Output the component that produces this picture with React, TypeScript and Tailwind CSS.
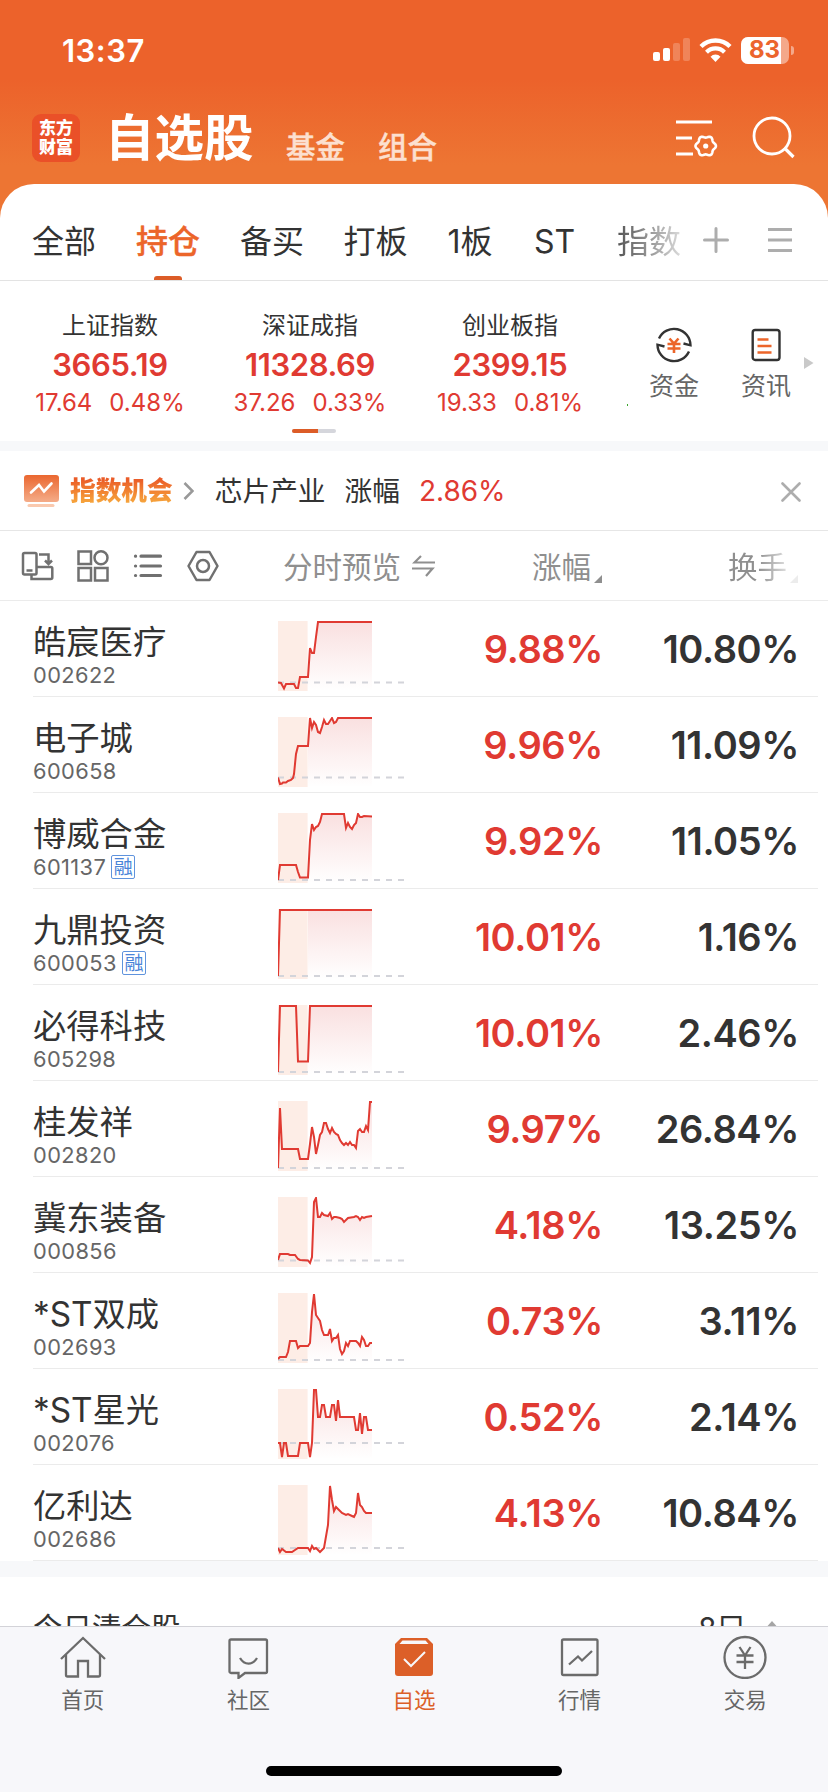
import { useId } from 'react';

type Point = [number, number];

type Stock = {
  name: string;
  code: string;
  margin?: boolean;
  change: string;
  turnover: string;
  base: number;
  points: Point[];
};

const tabs = [
  { label: '全部', className: 'w-[104px]' },
  { label: '持仓', className: 'w-[104px]', active: true },
  { label: '备买', className: 'w-[104px]' },
  { label: '打板', className: 'w-[103px]' },
  { label: '1板', className: 'w-[86px]' },
  { label: 'ST', className: 'w-[83px]' },
];

const indices = [
  { name: '上证指数', value: '3665.19', diff: '17.64', pct: '0.48%' },
  { name: '深证成指', value: '11328.69', diff: '37.26', pct: '0.33%' },
  { name: '创业板指', value: '2399.15', diff: '19.33', pct: '0.81%' },
];

const stocks: Stock[] = [
  {
    name: '皓宸医疗', code: '002622', change: '9.88%', turnover: '10.80%', base: 61.5,
    points: [[0, 61.5], [3, 62], [6, 67.5], [8, 63], [16, 63], [18, 67], [20, 67], [22, 56], [30, 56], [32, 27], [34, 32], [36, 32], [38, 16], [40, 1], [94, 1]],
  },
  {
    name: '电子城', code: '600658', change: '9.96%', turnover: '11.09%', base: 60.5,
    points: [[0, 60.5], [2, 67], [4, 66.5], [5, 65.5], [8, 65.5], [10, 64], [13, 63], [15, 61], [16, 57], [18, 37], [20, 29], [30, 29], [32, 1], [34, 11], [36, 5], [38, 8], [40, 15], [42, 16], [44, 10], [46, 3], [48, 7], [50, 7], [52, 4], [54, 1], [56, 6], [58, 5], [60, 1], [94, 1]],
  },
  {
    name: '博威合金', code: '601137', margin: true, change: '9.92%', turnover: '11.05%', base: 67,
    points: [[0, 67], [2, 52], [18, 52], [20, 59], [22, 64.5], [30, 64.5], [32, 27], [34, 11], [36, 17], [38, 14], [40, 13], [42, 9], [44, 1], [66, 1], [68, 15], [70, 10], [72, 14], [74, 16], [76, 12], [78, 10], [80, 1], [82, 4], [84, 4], [86, 3], [94, 3.5]],
  },
  {
    name: '九鼎投资', code: '600053', margin: true, change: '10.01%', turnover: '1.16%', base: 67,
    points: [[0, 67], [2, 1], [94, 1]],
  },
  {
    name: '必得科技', code: '605298', change: '10.01%', turnover: '2.46%', base: 67,
    points: [[0, 67], [2, 1], [18, 1], [20, 56.5], [30, 56.5], [32, 1], [94, 1]],
  },
  {
    name: '桂发祥', code: '002820', change: '9.97%', turnover: '26.84%', base: 67,
    points: [[0, 67], [2, 7], [4, 48], [20, 48], [22, 58], [30, 58], [32, 43], [34, 26], [36, 36], [38, 53], [40, 44], [42, 34], [44, 31], [46, 22], [48, 22], [50, 28], [52, 32], [54, 27], [56, 31], [58, 33], [60, 34], [62, 39], [64, 42], [66, 44], [68, 42], [70, 44], [72, 41], [74, 44], [76, 44], [78, 47], [80, 30], [82, 28], [84, 31], [86, 31], [88, 25], [90, 29], [92, 1], [94, 1]],
  },
  {
    name: '冀东装备', code: '000856', change: '4.18%', turnover: '13.25%', base: 63.5,
    points: [[0, 63], [2, 57], [10, 57], [12, 58], [17, 58], [20, 62], [22, 63], [30, 63.5], [32, 66], [34, 60], [36, 5], [38, 1], [40, 20], [42, 20], [44, 16], [46, 18], [50, 19], [52, 16], [54, 22], [56, 20], [58, 20], [62, 21], [64, 22], [66, 25], [70, 21], [76, 20], [78, 19], [80, 20], [82, 23], [84, 20], [86, 21], [88, 20], [94, 19]],
  },
  {
    name: '*ST双成', code: '002693', change: '0.73%', turnover: '3.11%', base: 67,
    points: [[0, 66], [2, 64], [8, 64], [10, 59], [12, 48], [18, 48], [20, 55], [22, 53], [30, 53], [32, 50], [34, 19], [36, 1], [38, 22], [40, 25], [42, 28], [44, 37], [46, 42], [50, 42], [52, 36], [54, 48], [56, 45], [58, 45], [60, 42], [62, 56], [64, 61], [66, 58], [68, 50], [70, 53], [72, 48], [78, 48], [80, 50], [82, 53], [84, 44], [86, 47], [88, 53], [90, 53], [92, 50], [94, 50]],
  },
  {
    name: '*ST星光', code: '002076', change: '0.52%', turnover: '2.14%', base: 54,
    points: [[0, 54], [2, 54], [4, 68], [6, 54], [8, 54], [10, 67], [20, 67], [22, 54], [30, 54], [32, 68], [34, 54], [36, 1], [38, 1], [40, 28], [42, 28], [44, 16], [46, 16], [48, 28], [52, 28], [54, 16], [56, 16], [58, 32], [60, 11], [62, 28], [76, 28], [78, 41], [80, 41], [82, 24], [84, 45], [86, 28], [88, 28], [90, 41], [94, 41]],
  },
  {
    name: '亿利达', code: '002686', change: '4.13%', turnover: '10.84%', base: 63,
    points: [[0, 63], [2, 67], [4, 64], [8, 67], [14, 67], [20, 63], [30, 63], [32, 66], [34, 61], [36, 64], [38, 63], [40, 65], [42, 67], [46, 63], [50, 40], [52, 1], [54, 15], [56, 26], [58, 22], [60, 24], [64, 28], [68, 30], [70, 29], [74, 31], [76, 32], [78, 28], [80, 8], [82, 20], [84, 22], [86, 26], [88, 28], [94, 28]],
  },
];

// six-lobed cog outline around (30.7, 28)
const cog = Array.from({ length: 72 }, (_, i) => {
  const a = (i * Math.PI) / 36;
  const r = 9.3 + 0.95 * Math.cos(6 * a);
  return `${(30.7 + r * Math.cos(a)).toFixed(2)},${(28 + r * Math.sin(a)).toFixed(2)}`;
}).join(' ');

function Sparkline({ points, base }: { points: Point[]; base: number }) {
  const id = useId();
  const line = points.map((p) => p.join(',')).join(' ');

  return (
    <svg width="126" height="70" viewBox="0 0 126 70" fill="none">
      <defs>
        <linearGradient id={`${id}-fill`} x1="0" y1="0" x2="0" y2="70" gradientUnits="userSpaceOnUse">
          <stop stopColor="#dc3a3a" stopOpacity="0.16" />
          <stop offset="1" stopColor="#dc3a3a" stopOpacity="0" />
        </linearGradient>
        <clipPath id={`${id}-clip`}>
          <rect x="30" width="64" height="70" />
        </clipPath>
      </defs>
      <rect width="29.6" height="70" fill="#fdede6" />
      <polygon points={`0,70 ${line} 94,70`} fill={`url(#${id}-fill)`} clipPath={`url(#${id}-clip)`} />
      <path d={`M0 ${base}H126`} stroke="#d3d4da" strokeWidth="2" strokeDasharray="6 6" />
      <polyline points={line} stroke="#e03a32" strokeWidth="2" />
    </svg>
  );
}

function StatusBar() {
  return (
    <div className="flex h-[100px] items-center justify-between pl-[62px] pr-[34px] text-white">
      <span className="text-[31px] font-semibold leading-none tracking-[0.5px]">13:37</span>
      <div className="flex items-center gap-[9px]">
        <svg width="37" height="24" viewBox="0 0 37 24" fill="#fff">
          <rect y="14" width="7" height="9" rx="2" />
          <rect x="10" y="10" width="7" height="13" rx="2" />
          <rect x="20" y="5" width="7" height="18" rx="2" opacity="0.22" />
          <rect x="30" width="7" height="23" rx="2" opacity="0.22" />
        </svg>
        <svg width="33" height="24" viewBox="0 0 33 24" fill="none" stroke="#fff">
          <path d="M2 8.5a20.5 20.5 0 0 1 29 0" strokeWidth="4.4" />
          <path d="M7.5 14.2a12.7 12.7 0 0 1 18 0" strokeWidth="4.2" />
          <path d="M16.500 24l-5-5.300a7 7 0 0 1 10 0z" fill="#fff" stroke="none" />
        </svg>
        <div className="flex items-center gap-[2px]">
          <div className="flex h-[27px] w-[48px] overflow-hidden rounded-[7px] bg-white/45">
            <div className="flex w-[40px] items-center justify-end bg-white pr-[1px] text-[24px] font-bold leading-none text-[#ec652d]">
              83
            </div>
          </div>
          <div className="h-[9px] w-[3px] rounded-r-full bg-white/45" />
        </div>
      </div>
    </div>
  );
}

function TopNav() {
  return (
    <div className="flex h-[84px] pl-8 pr-[33px] text-white">
      <div className="mt-[14px] flex size-12 flex-col items-center justify-center rounded-[9px] bg-[#ea5028] text-[17px] font-black leading-[19px]">
        <span className="h-[19px]">东方</span>
        <span className="h-[19px]">财富</span>
      </div>
      <h1 className="ml-[25px] mt-[10px] w-[150px] text-[49.500px] font-bold leading-[56px]">自选股</h1>
      <span className="ml-[31px] mt-[28px] text-[29.500px] font-medium leading-[38px] text-[#fce0d0] [-webkit-text-stroke:0.4px]">基金</span>
      <span className="ml-[33px] mt-[28px] text-[29.500px] font-medium leading-[38px] text-[#fce0d0] [-webkit-text-stroke:0.4px]">组合</span>
      <svg className="ml-auto mt-[18px]" width="44" height="40" viewBox="0 0 44 40" fill="none" stroke="#fff" strokeWidth="3">
        <path d="M1 4h36M1 20h16M1 36h17" />
        <polygon points={cog} strokeWidth="2.600" />
        <circle cx="30.700" cy="28" r="2.600" fill="#fff" stroke="none" />
      </svg>
      <svg className="ml-[32px] mt-[16px]" width="44" height="44" viewBox="0 0 44 44" fill="none" stroke="#fff" strokeWidth="2.800">
        <circle cx="21" cy="20" r="18" />
        <path d="M33.500 32l9 9" strokeWidth="3.200" />
      </svg>
    </div>
  );
}

function GroupTabs() {
  return (
    <div className="flex h-[97px] items-start rounded-t-[34px] border-b border-[#e3e3e3] bg-white text-[32px] text-[#333]">
      <div className="ml-[12px] flex h-full w-[672px] overflow-hidden">
        {tabs.map((tab) => (
          <div key={tab.label} className={`relative flex shrink-0 justify-center pt-[34px] leading-[48px] ${tab.className}`}>
            <span className={tab.active ? 'font-medium text-[#ec652a] [-webkit-text-stroke:0.4px]' : ''}>{tab.label}</span>
            {tab.active && <div className="absolute bottom-0 h-1 w-7 rounded-t-[3px] bg-[#dc5c27]" />}
          </div>
        ))}
        <span className="ml-[21px] w-[66px] shrink-0 bg-gradient-to-r from-[#555] to-[#e0e0e0] bg-clip-text pt-[34px] leading-[48px] text-transparent">
          指数
        </span>
      </div>
      <svg className="ml-[19px] mt-[43px]" width="26" height="26" viewBox="0 0 26 26" stroke="#adadad" strokeWidth="3" strokeLinecap="round">
        <path d="M1.500 13h23M13 1.500v23" />
      </svg>
      <svg className="ml-[39px] mt-[43px]" width="24" height="26" viewBox="0 0 24 26" stroke="#adadad" strokeWidth="3">
        <path d="M0 2.500h24M0 13h24M0 23.500h24" />
      </svg>
    </div>
  );
}

function IndexStrip() {
  return (
    <div className="flex h-[160px] bg-white">
      <div className="flex w-[628px] flex-col overflow-hidden pl-[10px]">
        <div className="flex h-[148px]">
          {indices.map((item) => (
            <div key={item.name} className="flex w-[200px] shrink-0 flex-col items-center pt-[27px]">
              <span className="text-[24px] leading-[36px] text-[#333]">{item.name}</span>
              <span className="mt-[3px] text-[31px] font-semibold leading-[36px] tracking-[-0.4px] text-[#e03a32]">{item.value}</span>
              <div className="mt-[4px] flex gap-[17px] text-[24px] leading-[32px] text-[#e03a32]">
                <span>{item.diff}</span>
                <span>{item.pct}</span>
              </div>
            </div>
          ))}
          <div className="ml-[17px] mt-[123px] h-[2px] w-px bg-[#3aa52b]" />
        </div>
        <div className="ml-[282px] flex h-1 w-11 overflow-hidden rounded-full bg-[#d5d6dc]">
          <div className="w-[26px] bg-[#dc5c27]" />
        </div>
      </div>
      <div className="flex w-[92px] flex-col items-center pt-[45px] text-[25px] leading-[36px] text-[#666]">
        <svg width="38" height="38" viewBox="0 0 38 38" fill="none" stroke="#333" strokeWidth="2.400">
          <path d="M4 12.500a16.500 16.500 0 0 1 31.500 6.800l-7-1.800M34 25.500A16.500 16.500 0 0 1 2.500 18.700l7 1.800" />
          <path d="M14.500 12.500l4.500 5 4.500-5M12.500 18h13M12.500 22.500h13M19 17.500v9.500" stroke="#ec652a" strokeWidth="2.600" />
        </svg>
        <span className="mt-[4px]">资金</span>
      </div>
      <div className="flex w-[92px] flex-col items-center pt-[45px] text-[25px] leading-[36px] text-[#666]">
        <svg width="30" height="38" viewBox="0 0 30 38" fill="none" stroke="#333" strokeWidth="2.400">
          <rect x="1.700" y="4" width="26.800" height="30" rx="2.500" />
          <path d="M6.500 13.500h11M6.500 20h14M6.500 26.500h14" stroke="#ec652a" strokeWidth="2.600" />
        </svg>
        <span className="mt-[4px]">资讯</span>
      </div>
      <svg className="-ml-2 mt-[76px]" width="10" height="12" viewBox="0 0 10 12" fill="#c9c9c9">
        <path d="M0 0l9.500 6L0 12z" />
      </svg>
    </div>
  );
}

function Opportunity() {
  return (
    <div className="flex h-[80px] items-center border-b border-[#e6e6e6] bg-white pl-6 pr-[28px]">
      <svg width="35" height="34" viewBox="0 0 35 34" fill="none">
        <defs>
          <linearGradient id="opportunity" x1="0" y1="0" x2="0" y2="27" gradientUnits="userSpaceOnUse">
            <stop stopColor="#ea642c" />
            <stop offset="1" stopColor="#f4aa86" />
          </linearGradient>
        </defs>
        <rect y="1" width="35" height="27" rx="3" fill="url(#opportunity)" />
        <path d="M7 18.500l8-7.500 5 6.500 7.500-8" stroke="#fff" strokeWidth="2.600" strokeLinecap="round" />
        <path d="M5 31.500h24" stroke="#fac9ae" strokeWidth="3" strokeLinecap="round" />
      </svg>
      <span className="ml-[11px] bg-gradient-to-b from-[#ea5c28] from-20% to-[#f6a43c] to-80% bg-clip-text text-[25.700px] font-black leading-[38px] text-transparent">
        指数机会
      </span>
      <svg className="ml-[10px]" width="11" height="18" viewBox="0 0 11 18" fill="none" stroke="#999" strokeWidth="2.600">
        <path d="M1.500 1l8 8-8 8" />
      </svg>
      <span className="ml-[21px] text-[27.700px] leading-[38px] text-[#333]">芯片产业</span>
      <span className="ml-[19px] text-[27.700px] leading-[38px] text-[#333]">涨幅</span>
      <span className="ml-[19px] text-[28px] leading-[38px] text-[#e03a32]">2.86%</span>
      <svg className="ml-auto mr-[-1px] mt-[2px]" width="20" height="20" viewBox="0 0 20 20" stroke="#adadad" strokeWidth="2.600" strokeLinecap="round">
        <path d="M1.500 1.500l17 17M18.500 1.500l-17 17" />
      </svg>
    </div>
  );
}

function TableHeader() {
  return (
    <div className="flex h-[70px] items-center border-b border-[#ebebeb] bg-white pl-[21px] text-[29.500px] text-[#8f8f8f]">
      <div className="flex w-[262px] items-center gap-[23px]">
        <svg width="33" height="32" viewBox="0 0 33 32" fill="none" stroke="#707070" strokeWidth="2.500">
          <rect x="2" y="3" width="13.500" height="21.500" rx="1.500" />
          <path d="M5.500 20.500h6M18 4.500h9.500V13M24 10.500l3.500 3.500 3.500-3.500M15.500 17h14.300a1.500 1.500 0 0 1 1.500 1.500v9a1.500 1.500 0 0 1-1.500 1.500H10.500v-4.500" />
        </svg>
        <svg width="32" height="32" viewBox="0 0 32 32" fill="none" stroke="#707070" strokeWidth="2.500">
          <rect x="1.500" y="1.500" width="12.500" height="12.500" />
          <circle cx="24" cy="7.800" r="6.500" />
          <rect x="1.500" y="18" width="12.500" height="12.500" />
          <rect x="18" y="18" width="12.500" height="12.500" />
        </svg>
        <svg className="ml-px" width="30" height="26" viewBox="0 0 30 26" fill="none" stroke="#707070" strokeWidth="3.200" strokeLinecap="round">
          <path d="M8 3.200h19.500M8 13h19.500M8 22.500h19.500M2.500 3.200h.1M2.500 13h.1M2.500 22.500h.1" />
        </svg>
        <svg className="ml-px" width="32" height="32" viewBox="0 0 32 32" fill="none" stroke="#707070" strokeWidth="2.500">
          <path d="M9.500 2h13L30.500 16l-8 14h-13L1.500 16z" strokeLinejoin="round" />
          <circle cx="16" cy="16" r="6" />
        </svg>
      </div>
      <span className="mt-[3px] w-[118px] leading-[42px]">分时预览</span>
      <svg className="ml-[11px]" width="23" height="22" viewBox="0 0 23 22" fill="none" stroke="#8f8f8f" strokeWidth="2.200">
        <path d="M23 7.500H2.500L9 1M0 13.500h20.500L14 21" />
      </svg>
      <span className="ml-[97px] mt-[3px] w-[59px] leading-[42px]">涨幅</span>
      <svg className="ml-[3px] mt-[26px]" width="8" height="8" viewBox="0 0 8 8" fill="#8f8f8f">
        <path d="M8 0v8H0z" />
      </svg>
      <span className="ml-[126px] mt-[3px] w-[59px] bg-gradient-to-r from-[#8f8f8f] from-50% to-[#dedede] bg-clip-text leading-[42px] text-transparent">
        换手
      </span>
      <svg className="ml-[3px] mt-[26px]" width="8" height="8" viewBox="0 0 8 8" fill="#ececec">
        <path d="M8 0v8H0z" />
      </svg>
    </div>
  );
}

function StockRow({ stock }: { stock: Stock }) {
  return (
    <div className="ml-[33px] mr-[10px] flex h-24 border-b border-[#ebebeb]">
      <div className="flex w-[245px] flex-col pt-[18px]">
        <span className="text-[33.300px] leading-[46px] text-[#333]">{stock.name}</span>
        <div className="-mt-[2px] flex h-[24px] items-center gap-[5px]">
          <span className="text-[21.800px] leading-[24px] tracking-[0.4px] text-[#666]">{stock.code}</span>
          {stock.margin && (
            <span className="flex size-6 items-center justify-center rounded-[2px] border border-[#5f93dd] text-[19px] leading-none text-[#4a84d8]">
              融
            </span>
          )}
        </div>
      </div>
      <div className="pt-[20px]">
        <Sparkline points={stock.points} base={stock.base} />
      </div>
      <span className="w-[199px] pt-[25px] text-right text-[38px] font-semibold leading-[46px] tracking-[-0.4px] text-[#e03a32]">
        {stock.change}
      </span>
      <span className="w-[196px] pt-[25px] text-right text-[38px] font-semibold leading-[46px] tracking-[-0.4px] text-[#333]">
        {stock.turnover}
      </span>
    </div>
  );
}

function BottomNav() {
  const item = 'flex w-[165.6px] flex-col items-center text-[21.500px] leading-[30px] text-[#666]';

  return (
    <div className="flex h-[166px] flex-col justify-between border-t border-[#d3d3d8] bg-[#f7f7fa] pb-4 pt-2">
      <div className="flex">
        <div className={item}>
          <svg width="46" height="44" viewBox="0 0 46 44" fill="none" stroke="#6b6b6b" strokeWidth="2.300">
            <path d="M1 24L23 3l22 21" />
            <path d="M6 19.500V40a1.500 1.500 0 0 0 1.500 1.500H18V26h10v15.500h10.500A1.500 1.500 0 0 0 40 40V19.500" />
          </svg>
          <span className="mt-[6px]">首页</span>
        </div>
        <div className={item}>
          <svg width="42" height="44" viewBox="0 0 42 44" fill="none" stroke="#6b6b6b" strokeWidth="2.300">
            <path d="M4 4.500h34.500A1.500 1.500 0 0 1 40 6v30.500a1.500 1.500 0 0 1-1.500 1.500H18l-6.500 5v-5H4a1.500 1.500 0 0 1-1.500-1.500V6A1.500 1.500 0 0 1 4 4.500z" />
            <path d="M13 23c4.500 7.500 12.500 7.500 17 0" />
          </svg>
          <span className="mt-[6px]">社区</span>
        </div>
        <div className={item}>
          <svg width="40" height="44" viewBox="0 0 40 44" fill="none">
            <path d="M7 3h26l6 6v29a3 3 0 0 1-3 3H4a3 3 0 0 1-3-3V9z" fill="#dc5f28" />
            <path d="M8.500 5.500h23l3 3.500h-29z" fill="#f7f7fa" />
            <path d="M10 24l7 7 14-14" stroke="#f7f7fa" strokeWidth="2" />
          </svg>
          <span className="mt-[6px] text-[#dc5f28]">自选</span>
        </div>
        <div className={item}>
          <svg width="40" height="44" viewBox="0 0 40 44" fill="none" stroke="#6b6b6b" strokeWidth="2.300">
            <rect x="2" y="4.500" width="35.500" height="35.500" rx="1.500" />
            <path d="M9 29.500l9-8 4 4L32 16" />
          </svg>
          <span className="mt-[6px]">行情</span>
        </div>
        <div className={item}>
          <svg width="44" height="44" viewBox="0 0 44 44" fill="none" stroke="#6b6b6b" strokeWidth="2.300">
            <circle cx="22" cy="22.500" r="20.500" />
            <path d="M16.500 12l5.500 8.500 5.500-8.500M13.500 20.500h17M13.500 27h17M22 20.500V34" />
          </svg>
          <span className="mt-[6px]">交易</span>
        </div>
      </div>
      <div className="mx-auto h-[10px] w-[296px] rounded-full bg-black" />
    </div>
  );
}

export default function App() {
  return (
    <div className="flex h-[1792px] w-[828px] flex-col overflow-hidden bg-white font-['Inter','Noto_Sans_CJK_SC',sans-serif]">
      <div className="bg-[linear-gradient(180deg,#ec622b_0px,#ec622b_80px,#ed7533_165px,#ed7533_230px)]">
        <StatusBar />
        <TopNav />
        <GroupTabs />
      </div>
      <IndexStrip />
      <div className="h-[10px] bg-[#f7f8fa]" />
      <Opportunity />
      <TableHeader />
      <div className="flex flex-col">
        {stocks.map((stock) => (
          <StockRow key={stock.code} stock={stock} />
        ))}
      </div>
      <div className="h-4 bg-[#f7f8fa]" />
      <div className="flex min-h-0 flex-1 items-start overflow-hidden pl-[33px] pr-[48px] pt-[29px] text-[29.500px] leading-[44px] text-[#333]">
        <span>今日清仓股</span>
        <span className="ml-auto">8只</span>
        <svg className="ml-[18px] mt-[15px]" width="16" height="9" viewBox="0 0 16 9" fill="#a5a5a5">
          <path d="M8 0l8 9H0z" />
        </svg>
      </div>
      <BottomNav />
    </div>
  );
}
